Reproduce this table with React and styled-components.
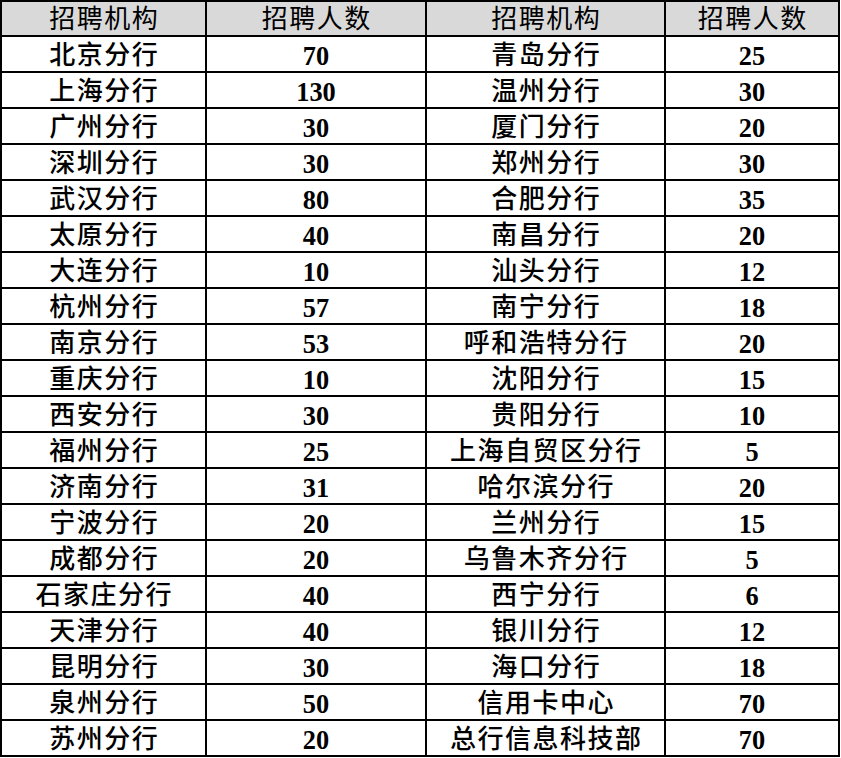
import React from 'react';
import styled, { createGlobalStyle } from 'styled-components';

const GlobalStyle = createGlobalStyle`
  body {
    margin: 0;
    background: #fff;
  }
`;

const Sheet = styled.div`
  display: grid;
  grid-template-columns: 203px 218px 237px 172px;
  grid-auto-rows: 34px;
  grid-template-rows: 33px;
  gap: 2px;
  padding: 2px;
  width: max-content;
  background: #000;
`;

const Cell = styled.div`
  display: flex;
  align-items: flex-end;
  justify-content: center;
  background: ${(p) => (p.$head ? '#d9d9d9' : '#fff')};
  color: #000;
  overflow: hidden;
  white-space: nowrap;
`;

const HeadText = styled.span`
  font-family: "Liberation Serif", "Noto Sans CJK SC", serif;
  font-size: 26px;
  font-weight: 400;
  letter-spacing: 1.5px;
  line-height: 30px;
  padding-left: 1.5px;
`;

const NameText = styled.span`
  font-family: "Liberation Serif", "Noto Sans CJK SC", serif;
  font-size: 26px;
  font-weight: 500;
  letter-spacing: 1.5px;
  line-height: 30px;
  padding-left: 1.5px;
`;

const CountText = styled.span`
  font-family: "Liberation Serif", serif;
  font-size: 28px;
  font-weight: 700;
  line-height: 31px;
  transform: scaleX(0.94);
`;

const rows = [
  ['北京分行', 70, '青岛分行', 25],
  ['上海分行', 130, '温州分行', 30],
  ['广州分行', 30, '厦门分行', 20],
  ['深圳分行', 30, '郑州分行', 30],
  ['武汉分行', 80, '合肥分行', 35],
  ['太原分行', 40, '南昌分行', 20],
  ['大连分行', 10, '汕头分行', 12],
  ['杭州分行', 57, '南宁分行', 18],
  ['南京分行', 53, '呼和浩特分行', 20],
  ['重庆分行', 10, '沈阳分行', 15],
  ['西安分行', 30, '贵阳分行', 10],
  ['福州分行', 25, '上海自贸区分行', 5],
  ['济南分行', 31, '哈尔滨分行', 20],
  ['宁波分行', 20, '兰州分行', 15],
  ['成都分行', 20, '乌鲁木齐分行', 5],
  ['石家庄分行', 40, '西宁分行', 6],
  ['天津分行', 40, '银川分行', 12],
  ['昆明分行', 30, '海口分行', 18],
  ['泉州分行', 50, '信用卡中心', 70],
  ['苏州分行', 20, '总行信息科技部', 70],
];

const headers = ['招聘机构', '招聘人数', '招聘机构', '招聘人数'];

export default function App() {
  return (
    <>
      <GlobalStyle />
      <Sheet>
        {headers.map((h, i) => (
          <Cell $head key={'h' + i}>
            <HeadText>{h}</HeadText>
          </Cell>
        ))}
        {rows.map((r, i) => (
          <React.Fragment key={i}>
            <Cell><NameText>{r[0]}</NameText></Cell>
            <Cell><CountText>{r[1]}</CountText></Cell>
            <Cell><NameText>{r[2]}</NameText></Cell>
            <Cell><CountText>{r[3]}</CountText></Cell>
          </React.Fragment>
        ))}
      </Sheet>
    </>
  );
}
